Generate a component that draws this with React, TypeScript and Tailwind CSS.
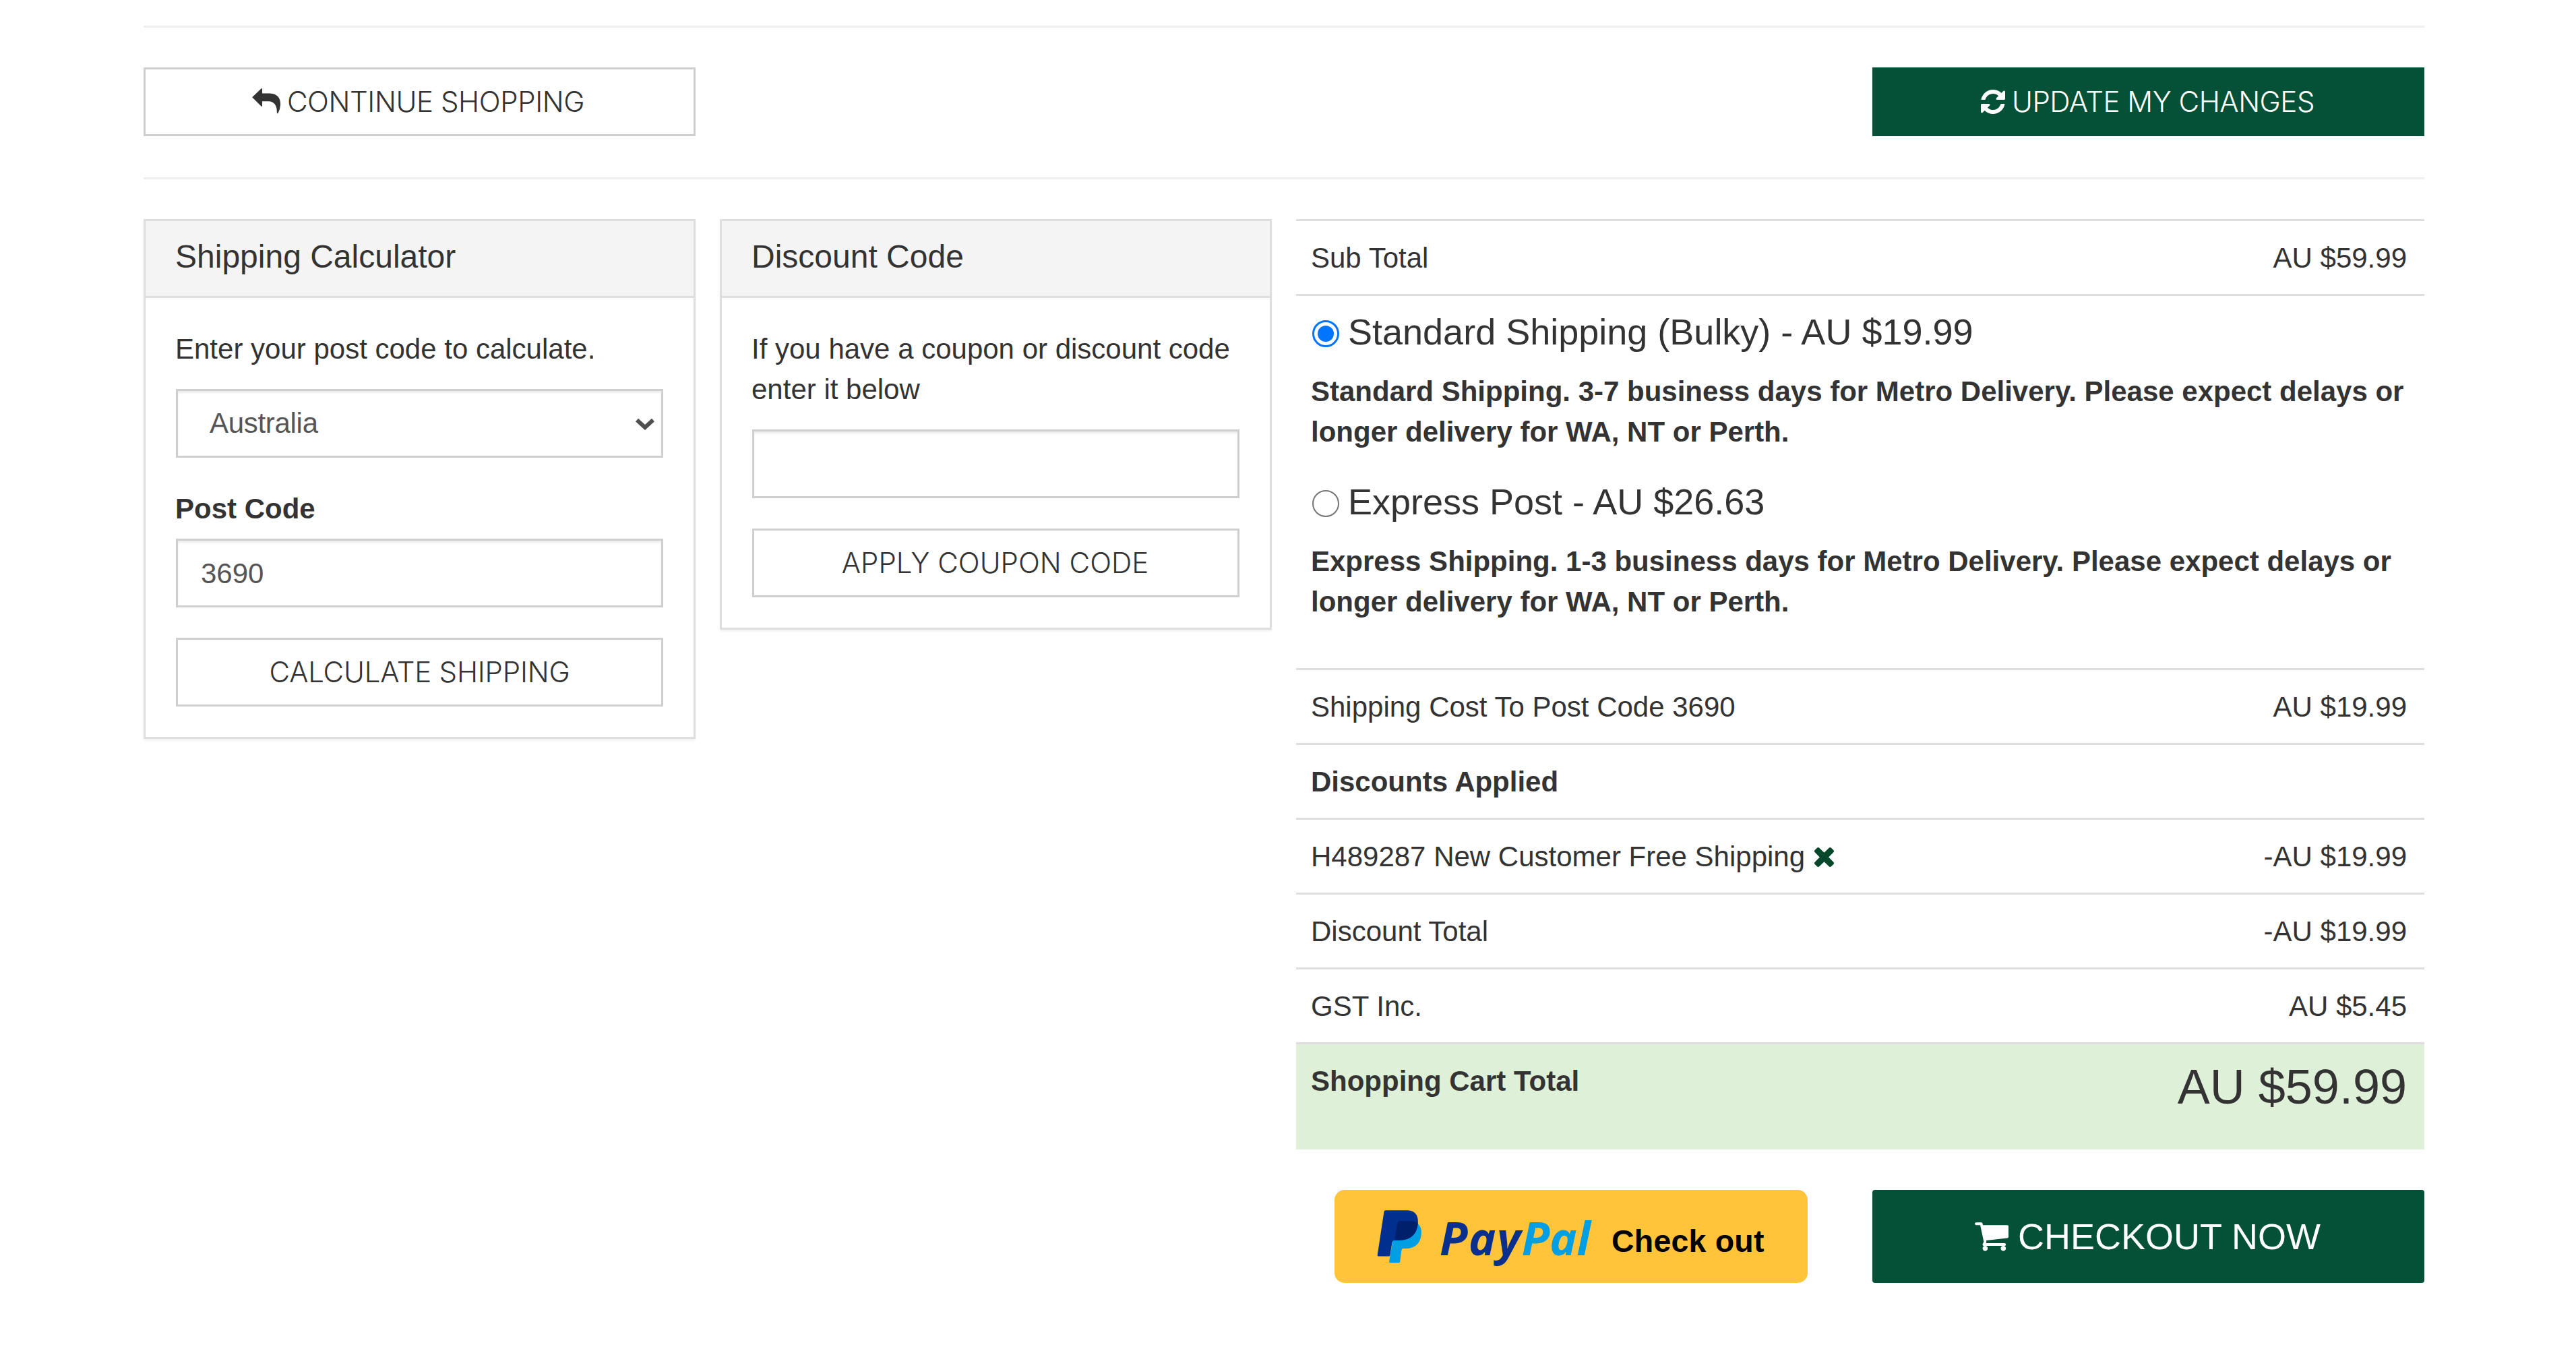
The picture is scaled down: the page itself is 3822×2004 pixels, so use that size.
import type { ReactNode } from "react"
import clsx from "clsx"

function ReplyIcon() {
  return (
    <svg viewBox="22 32 132 118" className="-mt-1 h-[39px] w-11 shrink-0" fill="currentColor">
      <path d="M25 75 L66 35.500 Q70 33 70 39 V58 H104 Q152 60 152 108 Q151 128 141 147 Q137 150 136 145 Q137 95 98 93.500 H70 V113 Q70 119 66 116 Z" />
    </svg>
  )
}

function RefreshIcon() {
  return (
    <svg viewBox="0 0 1536 1536" className="size-9 shrink-0" fill="currentColor">
      <path d="M1511 928q0 5-1 7-64 268-268 434.500T764 1536q-146 0-282.500-55T238 1324l-129 129q-19 19-45 19t-45-19-19-45V960q0-26 19-45t45-19h448q26 0 45 19t19 45-19 45l-137 137q71 66 161 102t187 36q134 0 250-65t186-179q11-17 53-117 8-23 30-23h192q13 0 22.500 9.500t9.500 22.500zm25-800v448q0 26-19 45t-45 19h-448q-26 0-45-19t-19-45 19-45l138-138Q969 256 768 256q-134 0-250 65T332 500q-11 17-53 117-8 23-30 23H50q-13 0-22.500-9.500T18 608v-7q65-268 270-434.500T768 0q146 0 284 55.500T1297 212l130-129q19-19 45-19t45 19 19 45z" />
    </svg>
  )
}

function CartIcon() {
  return (
    <svg viewBox="0 256 1664 1408" className="h-[43px] w-[50px] shrink-0" fill="currentColor">
      <path d="M640 1536q0 52-38 90t-90 38-90-38-38-90 38-90 90-38 90 38 38 90zm896 0q0 52-38 90t-90 38-90-38-38-90 38-90 90-38 90 38 38 90zm128-1088v512q0 24-16.500 42.500t-40.500 21.500l-1044 122q13 60 13 70 0 16-24 64h920q26 0 45 19t19 45-19 45-45 19h-1024q-26 0-45-19t-19-45q0-11 8-31.500t16-36 21.500-40 15.500-29.500l-177-823h-204q-26 0-45-19t-19-45 19-45 45-19h256q16 0 28.500 6.500t19.500 15.500 13 24.500 8 26 5.500 29.500 4.500 26h1201q26 0 45 19t19 45z" />
    </svg>
  )
}

function RemoveIcon() {
  return (
    <svg viewBox="302 366 1188 1188" className="size-[29px] text-[#05472a]" fill="currentColor">
      <path d="M1490 1322q0 40-28 68l-136 136q-28 28-68 28t-68-28l-294-294-294 294q-28 28-68 28t-68-28l-136-136q-28-28-28-68t28-68l294-294-294-294q-28-28-28-68t28-68l136-136q28-28 68-28t68 28l294 294 294-294q28-28 68-28t68 28l136 136q28 28 28 68t-28 68l-294 294 294 294q28 28 28 68z" />
    </svg>
  )
}

function PayPalMark() {
  return (
    <svg viewBox="40 40 200 245" className="mt-7 h-[82px] w-[67px] shrink-0">
      <path d="M210 98 Q238 112 237 148 Q232 216 166 216 H156 Q150 216 149 222 L142 275 Q141 279 137 279 H98 Q93 279 94 274 L112 170 Z" fill="#009ee3" />
      <path d="M79 47 H176 Q223 49 222 102 Q216 178 140 180 H120 Q109 180 107 190 L98 246 Q97 251 92 251 H47 Q41 251 42 245 L71 54 Q72 47 79 47 Z" fill="#00308f" />
      <path d="M130 104 Q134 94 146 94 H190 Q208 94 221 106 Q214 178 140 180 H118 Z" fill="#01206b" />
    </svg>
  )
}

function Button({ children, primary, className }: {
  children:   ReactNode
  primary?:   boolean
  className?: string
}) {
  return (
    <button
      className={clsx(
        "flex h-[102px] items-center justify-center font-[Inter,sans-serif] text-[42px] leading-[60px] font-light whitespace-nowrap",
        primary ? "bg-[#055137] text-white" : "border-[3px] border-[#cfcfcf] bg-white text-[#333]",
        className,
      )}
    >
      {children}
    </button>
  )
}

function Panel({ title, children }: { title: string; children: ReactNode }) {
  return (
    <section className="w-[819px] border-[3px] border-[#dedede] bg-white shadow-[0_3px_3px_rgba(0,0,0,0.05)]">
      <h3 className="h-[114px] border-b-[3px] border-[#dedede] bg-[#f4f4f4] px-11 pt-[23px] text-5xl leading-[60px]">
        {title}
      </h3>
      <div className="flex flex-col px-[45px] pt-[46px] pb-[45px]">{children}</div>
    </section>
  )
}

function Row({ label, value, bold }: { label: ReactNode; value?: string; bold?: boolean }) {
  return (
    <div className="flex h-[111px] items-start justify-between border-t-[3px] border-[#dedede] pt-[25px] pr-[26px] pl-[22px]">
      <span className={clsx(bold && "font-bold")}>{label}</span>
      <span>{value}</span>
    </div>
  )
}

function ShippingOption({ label, note, checked }: { label: string; note: string; checked?: boolean }) {
  return (
    <div>
      <label className="flex items-center text-[54px] leading-[60px]">
        <span
          className={clsx(
            "mt-1.5 mr-[13px] ml-0.5 flex size-10 items-center justify-center rounded-full",
            checked ? "border-[3px] border-[#0075ff]" : "border-[2.5px] border-[#767676]",
          )}
        >
          {checked && <span className="size-6 rounded-full bg-[#0075ff]" />}
        </span>
        {label}
      </label>
      <p className="mt-[29px] font-bold">{note}</p>
    </div>
  )
}

const field = "h-[102px] w-full rounded-none border-[3px] border-[#cfcfcf] bg-white text-[#555] shadow-[inset_0_3px_3px_rgba(0,0,0,0.075)] outline-none"

export default function App() {
  return (
    <main className="w-[3597px] bg-white pt-[38px] pl-[213px] font-['Liberation_Sans',Arial,sans-serif] text-[42px] leading-[60px] text-[#333]">
      <hr className="h-[3px] border-0 bg-[#efefef]" />
      <div className="mt-[59px] flex justify-between">
        <Button className="w-[819px] gap-[9px] pr-[5px] tracking-[-0.4px]"><ReplyIcon />CONTINUE SHOPPING</Button>
        <Button primary className="w-[819px] gap-2.5 pr-0.5 tracking-[-0.45px]"><RefreshIcon />UPDATE MY CHANGES</Button>
      </div>
      <hr className="mt-[61px] h-[3px] border-0 bg-[#efefef]" />

      <div className="mt-[59px] flex items-start gap-9">
        <Panel title="Shipping Calculator">
          <p className="-ml-px">Enter your post code to calculate.</p>
          <div className="relative mt-[29px]">
            <select className={clsx(field, "appearance-none pl-[47px] tracking-[-0.3px]")} defaultValue="Australia">
              <option>Australia</option>
            </select>
            <svg viewBox="0 0 28 18" className="absolute top-[43px] right-[13px] h-[18px] w-7" fill="none" stroke="#4f4f4f" strokeWidth="6">
              <path d="M2 3 L14 14 L26 3" />
            </svg>
          </div>
          <label className="mt-[46px] -ml-px font-bold">Post Code</label>
          <input className={clsx(field, "mt-3.5 px-[34px] pt-px")} defaultValue="3690" />
          <Button className="mt-[45px] tracking-[-0.2px]">CALCULATE SHIPPING</Button>
        </Panel>

        <Panel title="Discount Code">
          <p className="-ml-px">If you have a coupon or discount code enter it below</p>
          <input className={clsx(field, "mt-[29px] px-[34px]")} />
          <Button className="mt-[45px] pr-0.5">APPLY COUPON CODE</Button>
        </Panel>

        <section className="w-[1674px]">
          <Row label="Sub Total" value="AU $59.99" />
          <div className="flex h-[555px] flex-col gap-[43px] border-t-[3px] border-[#dedede] px-[22px] pt-[23px]">
            <ShippingOption
              checked
              label="Standard Shipping (Bulky) - AU $19.99"
              note="Standard Shipping. 3-7 business days for Metro Delivery. Please expect delays or longer delivery for WA, NT or Perth."
            />
            <ShippingOption
              label="Express Post - AU $26.63"
              note="Express Shipping. 1-3 business days for Metro Delivery. Please expect delays or longer delivery for WA, NT or Perth."
            />
          </div>
          <Row label="Shipping Cost To Post Code 3690" value="AU $19.99" />
          <Row bold label="Discounts Applied" />
          <Row
            label={<span className="flex items-center gap-3.5">H489287 New Customer Free Shipping <RemoveIcon /></span>}
            value="-AU $19.99"
          />
          <Row label="Discount Total" value="-AU $19.99" />
          <Row label="GST Inc." value="AU $5.45" />
          <div className="flex h-[159px] items-start justify-between border-t-[3px] border-[#dedede] bg-[#dff0d8] pt-[25px] pr-[26px] pl-[22px]">
            <span className="font-bold">Shopping Cart Total</span>
            <span className="text-7xl leading-[76px]">AU $59.99</span>
          </div>

          <div className="mt-[60px] flex justify-between pl-[57px]">
            <button className="flex h-[138px] w-[702px] items-start rounded-[15px] bg-[#ffc439] pl-[63px]">
              <PayPalMark />
              <span className="mt-[25px] ml-[26px] w-[255px] text-left font-['Open_Sans',sans-serif] text-[68px] leading-[92px] font-bold tracking-[1.5px] text-[#0a2f8c] italic">
                Pay<span className="tracking-normal text-[#009ee3]">Pal</span>
              </span>
              <span className="mt-[46px] text-[46.5px] font-bold tracking-[0.2px] text-black">Check out</span>
            </button>
            <button className="flex h-[138px] w-[819px] items-center justify-center gap-3.5 rounded bg-[#055137] pr-0.5 text-[54px] leading-[60px] text-white">
              <CartIcon />CHECKOUT NOW
            </button>
          </div>
        </section>
      </div>
    </main>
  )
}
